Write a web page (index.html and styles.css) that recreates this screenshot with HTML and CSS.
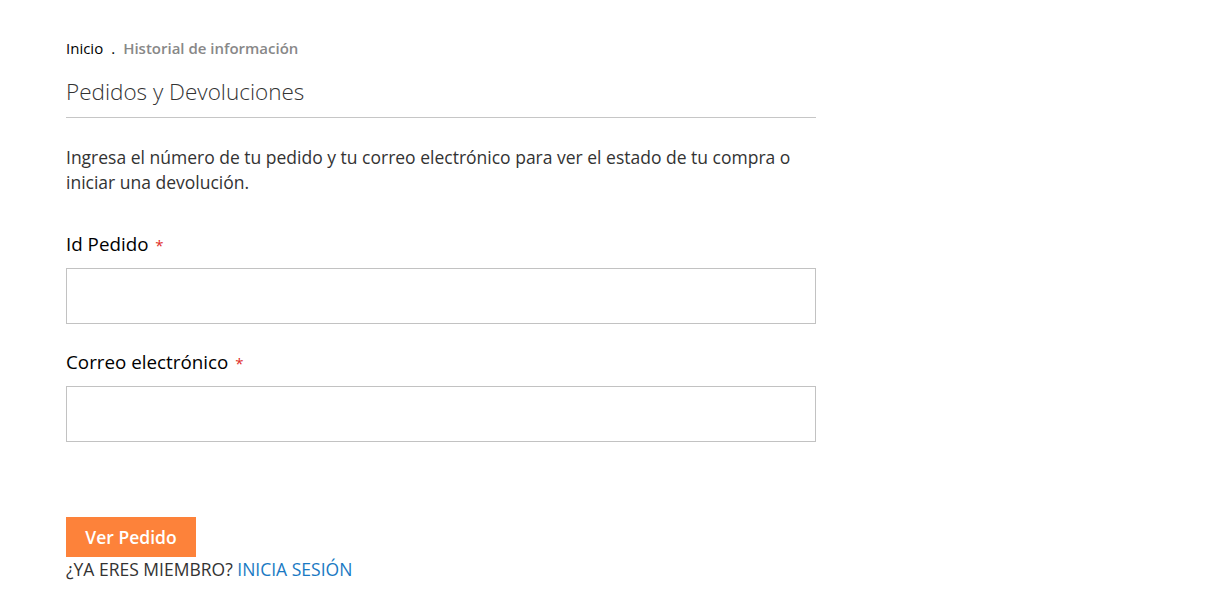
FILE: index.html
```html
<!DOCTYPE html>
<html lang="es">
<head>
    <meta charset="UTF-8">
    <title>Pedidos y Devoluciones</title>
    <link rel="stylesheet" href="styles.css">
</head>
<body>
    <main class="page">
        <div class="breadcrumbs">
            <a href="#">Inicio</a>
            <span class="sep">.</span>
            <strong>Historial de información</strong>
        </div>
        <h1 class="page-title">Pedidos y Devoluciones</h1>
        <p class="intro">Ingresa el número de tu pedido y tu correo electrónico para ver el estado de tu compra o iniciar una devolución.</p>
        <form class="order-form">
            <div class="field">
                <label for="orderId">Id Pedido <span class="req">*</span></label>
                <input type="text" id="orderId">
            </div>
            <div class="field">
                <label for="email">Correo electrónico <span class="req">*</span></label>
                <input type="email" id="email">
            </div>
            <button type="button" class="btn">Ver Pedido</button>
            <div class="member">¿YA ERES MIEMBRO? <a href="#">INICIA SESIÓN</a></div>
        </form>
    </main>
</body>
</html>
```

FILE: styles.css
```css
body {
    margin: 0;
    font-family: "Open Sans", Arial, sans-serif;
    color: #333;
    background: #fff;
}
.page {
    width: 750px;
    padding: 38px 0 0 66px;
}
.breadcrumbs {
    font-size: 15px;
    line-height: 20px;
    display: flex;
    gap: 8px;
}
.breadcrumbs a {
    color: #000;
    text-decoration: none;
}
.breadcrumbs .sep {
    color: #000;
}
.breadcrumbs strong {
    color: #888;
    font-weight: 600;
}
.page-title {
    margin: 19px 0 0;
    font-weight: 300;
    font-size: 22.5px;
    line-height: 30px;
    color: #333;
    padding-bottom: 10px;
    border-bottom: 1px solid #c6c6c6;
}
.intro {
    margin: 27px 0 0;
    font-size: 17.5px;
    line-height: 25px;
    color: #333;
}
.order-form {
    margin-top: 37px;
}
.field {
    margin-bottom: 26px;
}
.field label {
    display: block;
    font-size: 18.8px;
    line-height: 25px;
    color: #000;
    margin-bottom: 10px;
}
.req {
    color: #e02b27;
    font-size: 15px;
    margin-left: 2px;
}
.field input {
    box-sizing: border-box;
    display: block;
    width: 750px;
    height: 56px;
    border: 1px solid #c2c2c2;
    margin: 0;
    font-size: 16px;
}
.btn {
    margin-top: 49px;
    background: #fd823a;
    color: #fff;
    border: none;
    width: 130px;
    height: 40px;
    font-family: inherit;
    font-size: 17.5px;
    font-weight: 600;
    cursor: pointer;
}
.member {
    font-size: 17.5px;
    line-height: 24px;
    color: #333;
}
.member a {
    color: #1979c3;
    text-decoration: none;
}
```
